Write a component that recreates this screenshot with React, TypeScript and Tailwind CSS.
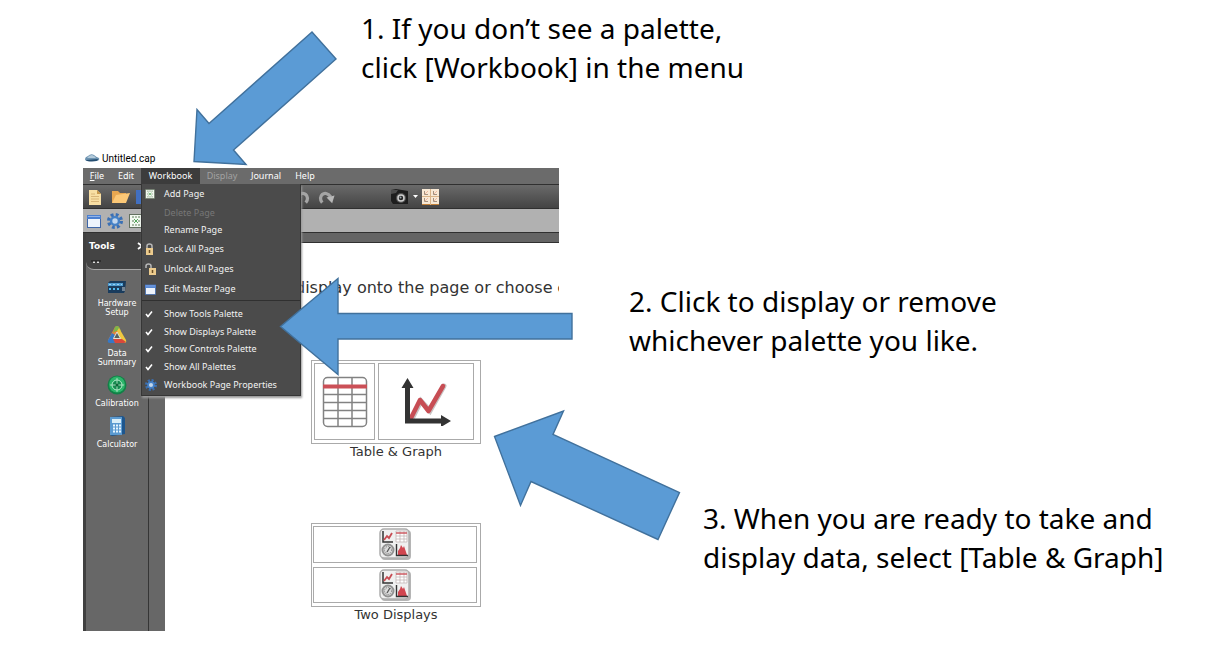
import React from "react";

type IconProps = { className?: string };

const CloudIcon = () => (
  <svg className="h-3 w-4" viewBox="0 0 16 12" aria-hidden="true">
    <path d="M1 7Q1 5 4 4Q7 1 10 3Q12 5 15 6Q16 8 13 9L4 9Q1 9 1 7Z" fill="#6d93b1" />
    <path d="M3 6Q5 3 8 3Q11 4 12 6Z" fill="#b3cada" />
    <path d="M2 8L14 7Q14 9.500 8 9.500Q3 9.500 2 8Z" fill="#244d70" />
  </svg>
);

const DocIcon = () => (
  <svg className="h-4 w-4" viewBox="0 0 16 16" aria-hidden="true">
    <path d="M2 1H10L14 5V16H2Z" fill="#f8dfa4" />
    <path d="M10 1V5H14Z" fill="#c99a4c" />
    <path d="M4 5H8M4 7.500H12M4 10H12M4 12.500H12" stroke="#d9b679" />
  </svg>
);

const FolderIcon = () => (
  <svg className="h-4 w-5" viewBox="0 0 20 16" aria-hidden="true">
    <path d="M1 2H7L9 4H15V14H1Z" fill="#e8a750" />
    <path d="M5 6L19 4L15 14H1Z" fill="#fbc877" />
  </svg>
);

const SaveIcon = () => (
  <svg className="h-4 w-4" viewBox="0 0 16 16" aria-hidden="true">
    <path d="M1 1H15V15H1Z" fill="#416fc0" />
    <path d="M8 2H12V7H8Z" fill="#d9e5f7" />
  </svg>
);

const CurveArrow = ({ className }: IconProps) => (
  <svg className={className} viewBox="0 0 18 16" aria-hidden="true">
    <path d="M4.500 14C-1 8 7 -1 13.500 8" fill="none" stroke="#a5a5a5" strokeWidth="3.500" />
    <path d="M9 8.500L17.500 6.500L15 14.500Z" fill="#b9b9b9" />
  </svg>
);

const CameraIcon = () => (
  <svg className="h-4 w-[18px]" viewBox="0 0 18 16" aria-hidden="true">
    <path d="M0 1L5 0L17 2V15L2 15L0 12Z" fill="#1e1e1e" />
    <path d="M0 1L7 1L5 4L0 5Z" fill="#4d4d4d" />
    <circle cx="10" cy="9" r="5" fill="#555" />
    <circle cx="10" cy="9" r="3" fill="#262626" stroke="#d0d0d0" strokeWidth="1.500" />
    <circle cx="9.500" cy="8.500" r="1" fill="#9ba6ac" />
  </svg>
);

const BookIcon = () => (
  <svg className="h-4 w-[17px]" viewBox="0 0 17 16" aria-hidden="true">
    <rect width="17" height="16" fill="#c48139" />
    <path d="M0 0H8V15H0ZM9 0H17V15H9Z" fill="#f8e9d5" />
    <path d="M2.500 2V5.500H6M11.500 2V5.500H15M2.500 9V12.500H6M11.500 9V12.500H15" fill="none" stroke="#a3907f" />
    <path d="M3 5L6 2M12 5L15 2M3 12L6 9M12 12L15 9" stroke="#efb99e" />
    <path d="M8.500 0V16M0 7.500H17" stroke="#d9b489" />
  </svg>
);

const WindowIcon = ({ className }: IconProps) => (
  <svg className={className} viewBox="0 0 14 14" aria-hidden="true">
    <rect x=".5" y="1.500" width="13" height="12" fill="#eef4fc" stroke="#3f67a8" />
    <path d="M0 1H14V5H0Z" fill="#4b7fd0" />
    <path d="M1 2H13V3H1Z" fill="#91b3e8" />
  </svg>
);

const GearIcon = ({ className }: IconProps) => (
  <svg className={className} viewBox="0 0 16 16" aria-hidden="true">
    <circle cx="8" cy="8" r="6" fill="none" stroke="#3a70b5" strokeWidth="4" strokeDasharray="2.600 2.110" />
    <circle cx="8" cy="8" r="3.900" fill="#c3d7ed" stroke="#4581c6" strokeWidth="2.400" />
  </svg>
);

const PageIcon = ({ className }: IconProps) => (
  <svg className={className} viewBox="0 0 14 14" aria-hidden="true">
    <rect x=".5" y=".5" width="13" height="13" fill="#f2f8f0" stroke="#62705f" />
    <path d="M3 3H5M9 3H11M3 7H5M9 7H11M3 11H5M9 11H11M7 2V4M7 10V12" stroke="#8fa58b" strokeWidth="1.400" />
    <path d="M5 5L9 9M9 5L5 9" stroke="#55a65b" />
  </svg>
);

const LockIcon = ({ open }: { open?: boolean }) => (
  <svg className="h-3 w-3" viewBox="0 0 12 12" aria-hidden="true">
    <path
      d={open ? "M1 5V3Q1 1 3.500 1Q6 1 6 3V6" : "M2 6V3Q2 1 4.500 1Q7 1 7 3V6"}
      fill="none"
      stroke="#b9b9b9"
      strokeWidth="1.500"
    />
    {open ? (
      <path d="M4 5H11V12H4Z" fill="#eccb8d" />
    ) : (
      <path d="M1 5H8V12H1Z" fill="#eccb8d" />
    )}
    <path d={open ? "M7.500 7V10" : "M4.500 7V10"} stroke="#6b4e25" strokeWidth="1.500" />
  </svg>
);

const CheckIcon = () => (
  <svg className="h-2 w-2" viewBox="0 0 8 8" aria-hidden="true">
    <path d="M1 4L3 6.500L7 1.500" fill="none" stroke="#fff" strokeWidth="1.600" />
  </svg>
);

const HardwareIcon = () => (
  <svg className="h-4 w-5" viewBox="0 0 20 16" aria-hidden="true">
    <path d="M1 4L3 2H19L18 12L17 14H1Z" fill="#1a3c5d" />
    <path d="M1 4H16V7H1Z" fill="#4e9bd0" />
    <path d="M2 5.500H4M6 5.500H8M10 5.500H12M14 5.500H15" stroke="#9bd4f5" />
    <path d="M2 10H4M6 10H8M10 10H12" stroke="#50b9ef" strokeWidth="2" />
    <path d="M15 8H18V12H15Z" fill="#738596" />
  </svg>
);

const SummaryIcon = () => (
  <svg className="h-5 w-5" viewBox="0 0 20 20" aria-hidden="true">
    <path d="M8 2Q10 0 12 2L13.500 5L7 16L1 15Z" fill="#e8803a" />
    <path d="M8 2Q10 0 12 2L14 6L9 6L6 8Z" fill="#7db64b" />
    <path d="M12 3L19 15Q20 17 18 18L14 15L10 6Z" fill="#efc83f" />
    <path d="M6 14H15L19 17Q18 18 16 18H4Z" fill="#d9483b" />
    <path d="M5 8L8 10L6 14L8 18H3Q0 18 1 15Z" fill="#3578c7" />
    <path d="M10 7L13.500 13.500H6.500Z" fill="#5a625e" stroke="#e9eee4" strokeWidth=".9" />
  </svg>
);

const CalibrationIcon = () => (
  <svg className="h-5 w-5" viewBox="0 0 20 20" aria-hidden="true">
    <circle cx="10" cy="10" r="9.500" fill="#128047" />
    <circle cx="10" cy="9.500" r="8" fill="#2cb56a" />
    <circle cx="10" cy="10" r="5" fill="#168a4f" stroke="#b6edcc" />
    <path d="M10 3V17M3 10H17" stroke="#a5dfbc" />
    <circle cx="10" cy="10" r="1.500" fill="#126339" />
  </svg>
);

const CalculatorIcon = () => (
  <svg className="h-5 w-4" viewBox="0 0 16 20" aria-hidden="true">
    <path d="M1 1L14 0L16 2V18L3 20L1 19Z" fill="#1e568d" />
    <path d="M1 1H13V19H1Z" fill="#5b9ad0" />
    <path d="M3 3H12V7H3Z" fill="#d9eef8" />
    <path d="M4 9.500H6M7 9.500H9M10 9.500H12M4 12.500H6M7 12.500H9M10 12.500H12M4 15.500H6M7 15.500H9M10 15.500H12" stroke="#e7f6ff" strokeWidth="2" />
  </svg>
);

const TableDrawing = () => (
  <svg className="h-[52px] w-[46px]" viewBox="0 0 46 52" aria-hidden="true">
    <rect x="1.500" y="1.500" width="43" height="49" rx="4" fill="#fff" stroke="#828282" strokeWidth="1.500" />
    <path d="M2 18.500H44M2 26.500H44M2 34.500H44M2 42.500H44M16 2V50M30 2V50" stroke="#828282" strokeWidth="1.500" />
    <path d="M1 10.500H45" stroke="#cb5057" strokeWidth="4" />
  </svg>
);

const GraphDrawing = () => (
  <svg className="h-12 w-[50px]" viewBox="0 0 50 48" aria-hidden="true">
    <path d="M11 41L20 23L29 33L43 8" fill="none" stroke="#c9c4c4" strokeWidth="5" strokeLinecap="round" />
    <path d="M10 40L19 22L27.500 33L42 8" fill="none" stroke="#c74d54" strokeWidth="4.500" strokeLinecap="round" strokeLinejoin="round" />
    <path d="M6.500 8V43H41" fill="none" stroke="#333" strokeWidth="5" />
    <path d="M6.500 0L12.500 10H.5ZM50 43L40 49V37Z" fill="#333" />
  </svg>
);

const DisplayDrawing = () => (
  <svg className="size-8" viewBox="0 0 32 32" aria-hidden="true">
    <rect x="2" y="2" width="30" height="30" rx="4" fill="#b5b5b5" />
    <rect x="1" y="1" width="29" height="29" rx="4" fill="#f0f0f0" stroke="#adadad" strokeWidth="1.500" />
    <path d="M4 3V14H14" fill="none" stroke="#333" strokeWidth="1.500" />
    <path d="M5 12L8 8L10 10L13 5" fill="none" stroke="#c74d54" strokeWidth="1.800" />
    <path d="M17 3H28V14H17ZM17 8H28M17 11H28M21 3V14M25 3V14" fill="#fff" stroke="#c3b6b6" strokeWidth=".8" />
    <path d="M17 5H28" stroke="#cd5961" strokeWidth="1.500" />
    <circle cx="9" cy="22" r="5.500" fill="#ddd" stroke="#929292" strokeWidth="2" />
    <circle cx="9" cy="22" r="3.500" fill="none" stroke="#777" strokeDasharray="1 1" />
    <path d="M8 24L11 19" stroke="#555" strokeWidth="1.300" />
    <path d="M19 27V23L21 20L22 17L24 20L25 18L27 24L28 27Z" fill="#d14650" />
    <path d="M17.500 16V27.500H29" fill="none" stroke="#333" strokeWidth="1.400" />
  </svg>
);

type MenuEntry = { label: string; icon?: React.ReactNode; height: string; disabled?: boolean };

const pageItems: MenuEntry[] = [
  { label: "Add Page", icon: <PageIcon className="size-[10px]" />, height: "h-5" },
  { label: "Delete Page", height: "h-[17px]", disabled: true },
  { label: "Rename Page", height: "h-[18px]" },
  { label: "Lock All Pages", icon: <LockIcon />, height: "h-5" },
  { label: "Unlock All Pages", icon: <LockIcon open />, height: "h-5" },
  { label: "Edit Master Page", icon: <WindowIcon className="size-[11px]" />, height: "h-5" },
];

const paletteItems: MenuEntry[] = [
  { label: "Show Tools Palette", icon: <CheckIcon />, height: "h-[18px]" },
  { label: "Show Displays Palette", icon: <CheckIcon />, height: "h-[17px]" },
  { label: "Show Controls Palette", icon: <CheckIcon />, height: "h-[18px]" },
  { label: "Show All Palettes", icon: <CheckIcon />, height: "h-[17px]" },
  { label: "Workbook Page Properties", icon: <GearIcon className="size-3" />, height: "h-5" },
];

const MenuItem = ({ label, icon, height, disabled }: MenuEntry) => (
  <button
    role="menuitem"
    disabled={disabled}
    className={`flex w-full items-center whitespace-nowrap text-left ${height} ${disabled ? "text-[#777]" : "text-[#f2f2f2]"}`}
  >
    <span className="flex w-[22px] shrink-0 pl-[3px]">{icon}</span>
    {label}
  </button>
);

const WorkbookMenu = () => (
  <div
    role="menu"
    aria-label="Workbook"
    className="absolute left-0 top-full z-10 w-40 border border-t-0 border-[#363636] bg-[#4b4b4b] shadow-[1px_2px_2px_#999]"
  >
    {pageItems.map((item) => (
      <MenuItem key={item.label} {...item} />
    ))}
    <div role="separator" className="mb-1 mt-px h-px bg-[#303030]" />
    {paletteItems.map((item) => (
      <MenuItem key={item.label} {...item} />
    ))}
  </div>
);

const tools = [
  { label: "Hardware Setup", icon: <HardwareIcon />, width: "w-12" },
  { label: "Data Summary", icon: <SummaryIcon />, width: "w-12" },
  { label: "Calibration", icon: <CalibrationIcon />, width: "w-14" },
  { label: "Calculator", icon: <CalculatorIcon />, width: "w-14" },
];

const AppWindow = () => (
  <section aria-label="Untitled.cap" className="flex w-[476px] shrink-0 flex-col font-['Noto_Sans',sans-serif] text-[9px]">
    <div className="flex h-5 items-center gap-[2px] pl-px font-[Roboto,sans-serif] text-[10px] text-black">
      <CloudIcon />
      Untitled.cap
    </div>
    <nav className="flex h-4 items-stretch bg-[#6b6b6b] leading-4 text-white">
      <button className="w-7 text-center"><u>F</u>ile</button>
      <button className="w-[30px] text-center">Edit</button>
      <div className="relative">
        <button className="h-4 w-[59px] bg-[#3c3c3c] text-center" aria-expanded="true">Workbook</button>
        <WorkbookMenu />
      </div>
      <button className="w-11 text-center text-[#a2a2a2]" disabled>Display</button>
      <button className="w-11 text-center">Journal</button>
      <button className="w-[34px] text-center">Help</button>
    </nav>
    <div className="flex h-[25px] items-center border-y border-[#303030] bg-linear-to-b from-[#6a6a6a] to-[#444] pl-1">
      <button aria-label="New"><DocIcon /></button>
      <button aria-label="Open" className="ml-2"><FolderIcon /></button>
      <button aria-label="Save" className="ml-1"><SaveIcon /></button>
      <button aria-label="Undo" className="ml-[142px]"><CurveArrow className="h-4 w-[17px] -scale-x-100" /></button>
      <button aria-label="Redo" className="ml-2"><CurveArrow className="h-4 w-[17px]" /></button>
      <button aria-label="Snapshot" className="ml-14"><CameraIcon /></button>
      <button aria-label="Snapshot options" className="ml-1">
        <svg className="h-1 w-[5px]" viewBox="0 0 5 4" aria-hidden="true"><path d="M0 0H5L2.500 3Z" fill="#fff" /></svg>
      </button>
      <button aria-label="Journal pages" className="ml-1"><BookIcon /></button>
    </div>
    <div className="flex h-6 items-center gap-[6px] border-b border-[#303030] bg-[#b1b1b1] pl-1">
      <button aria-label="Page"><WindowIcon className="size-[14px]" /></button>
      <button aria-label="Properties"><GearIcon className="size-4" /></button>
      <button aria-label="Add page"><PageIcon className="size-[14px]" /></button>
    </div>
    <div className="flex h-[398px]">
      <aside className="w-[66px] border-l-[3px] border-r border-l-[#404040] border-r-[#353535] bg-[#676767] text-white">
        <div className="h-[37px] w-[58px] rounded-bl-lg border-b border-[#a6a6a6] bg-[#444] pl-[3px] pt-[7px]">
          <div className="flex justify-between font-['DejaVu_Sans',sans-serif] text-[9px] font-bold leading-3">
            <h2>Tools</h2>
            <svg className="mt-0.5 h-2 w-2" viewBox="0 0 8 8" aria-hidden="true"><path d="M2 1L6 4L2 7" fill="none" stroke="#fff" strokeWidth="1.800" /></svg>
          </div>
          <svg className="mt-2 h-1 w-3" viewBox="0 0 12 4" aria-hidden="true"><path d="M4 2H6M8 2H10" stroke="#ddd" strokeWidth="2" /><path d="M2 1H12" stroke="#171717" /></svg>
        </div>
        <div className="flex flex-col items-center gap-2 pt-[9px] font-['DejaVu_Sans',sans-serif] text-[8px] leading-[9px]">
          {tools.map((tool) => (
            <button key={tool.label} className="flex flex-col items-center gap-1">
              {tool.icon}
              <span className={`text-center ${tool.width}`}>{tool.label}</span>
            </button>
          ))}
        </div>
      </aside>
      <div className="w-4 bg-[#676767]" />
      <div className="flex min-w-0 flex-1 flex-col bg-white">
        <div className="h-[10px] border-b border-[#303030] bg-[#656565]" />
        <div className="overflow-hidden pl-[130px] pt-[35px] font-['DejaVu_Sans',sans-serif] text-[16px] leading-5 text-[#333]">
          <p className="whitespace-nowrap">display onto the page or choose <b>o</b></p>
        </div>
        <div className="ml-[146px] mt-[62px] flex w-[170px] flex-col gap-[63px] font-['DejaVu_Sans',sans-serif] text-[13px] leading-4 text-[#333]">
          <button className="text-center">
            <span className="flex h-[84px] gap-[3px] border border-[#aaa] pb-[3px] pl-[2px] pr-[6px] pt-[2px]">
              <span className="flex w-[61px] items-center justify-center border border-[#aaa]"><TableDrawing /></span>
              <span className="flex flex-1 items-center justify-center border border-[#aaa]"><GraphDrawing /></span>
            </span>
            Table &amp; Graph
          </button>
          <button className="text-center">
            <span className="flex h-[84px] flex-col gap-1 border border-[#aaa] pb-[3px] pl-px pr-[3px] pt-[2px]">
              <span className="flex flex-1 items-center justify-center border border-[#aaa]"><DisplayDrawing /></span>
              <span className="flex flex-1 items-center justify-center border border-[#aaa]"><DisplayDrawing /></span>
            </span>
            Two Displays
          </button>
        </div>
      </div>
    </div>
  </section>
);

const Arrows = () => (
  <svg className="pointer-events-none absolute left-0 top-0 z-20 h-[560px] w-[700px]" viewBox="0 0 700 560" aria-hidden="true">
    <g fill="#5b9bd5" stroke="#41719c" strokeWidth="1.400">
      <path d="M312 32L336 59L233.500 150L246 164.500L194 161.500L197 109.500L209 123.500Z" />
      <path d="M280.500 326.500L338 278.500V313.500H572V339H338V374.500Z" />
      <path d="M494.500 436.500L563.500 411L553 434.500L679.500 492.500L658 539.500L531 481.500L520.500 505.500Z" />
    </g>
  </svg>
);

export default function App() {
  return (
    <main className="relative min-h-screen overflow-x-auto bg-white font-['Noto_Sans',sans-serif] text-[28px] leading-[39px] text-black">
      <p className="h-[148px] pl-[361px] pt-[9px]">
        1. If you don’t see a palette,
        <br />
        click [Workbook] in the menu
      </p>
      <div className="flex items-start pl-[83px]">
        <AppWindow />
        <div className="ml-[70px] flex shrink-0 flex-col gap-[139px] pt-[134px]">
          <p>
            2. Click to display or remove
            <br />
            whichever palette you like.
          </p>
          <p className="pl-[74px]">
            3. When you are ready to take and
            <br />
            display data, select [Table &amp; Graph]
          </p>
        </div>
      </div>
      <Arrows />
    </main>
  );
}
